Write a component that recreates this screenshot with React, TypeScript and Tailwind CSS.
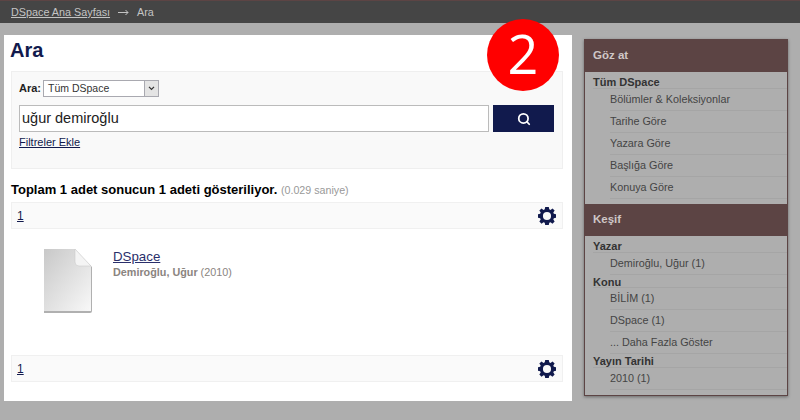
import { Search } from "lucide-react";

function Gear() {
  return (
    <svg viewBox="0 0 20 20" className="h-[18px] w-[18px] text-[#111a4d]" fill="currentColor">
      <path
        fillRule="evenodd"
        d="M8 0h4l.5 2.600 1.400.6 2.200-1.500L18.500 4l-1.500 2.200.6 1.400L20 8v4l-2.400.5-.6 1.400 1.500 2.200-2.400 2.400-2.200-1.500-1.400.6L12 20H8l-.5-2.400-1.400-.6-2.200 1.500L1.500 16.100 3 13.900l-.6-1.400L0 12V8l2.400-.4.6-1.400L1.500 4l2.400-2.300 2.200 1.500 1.400-.6L8 0Zm2 5.500a4.500 4.500 0 1 0 0 9 4.500 4.500 0 0 0 0-9Z"
      />
    </svg>
  );
}

function Pager() {
  return (
    <div className="flex h-[27px] items-center justify-between border border-[#f0f0f0] bg-[#fafafa] pr-[6px] pl-[5px]">
      <a className="text-[12px] text-[#111a4d] underline">1</a>
      <Gear />
    </div>
  );
}

function BoxHeader({ title }: { title: string }) {
  return (
    <div className="flex h-[32px] items-center bg-[#5c4444] pl-[8px] text-[11.5px] font-bold text-[#cfc7c7]">
      {title}
    </div>
  );
}

function GroupTitle({ title }: { title: string }) {
  return (
    <div className="ml-[8px] h-[13.5px] border-b border-[#a5a5a5] text-[11px] leading-[14px] font-bold text-[#333]">
      {title}
    </div>
  );
}

function Item({ label }: { label: string }) {
  return (
    <div className="ml-[25px] h-[22px] border-b border-[#a5a5a5] text-[10.8px] leading-[21px] text-[#444]">
      {label}
    </div>
  );
}

export default function App() {
  return (
    <div className="relative h-[420px] w-[800px] overflow-hidden bg-[#aeaeae] font-['Liberation_Sans',sans-serif]">
      {/* Breadcrumb */}
      <div className="flex h-[23px] items-center gap-[8px] border-t border-[#5c4444] bg-[#454545] pl-[11px] text-[10.8px] text-[#c4c4c4]">
        <a className="underline">DSpace Ana Sayfası</a>
        <svg viewBox="0 0 11 7" className="h-[7px] w-[11px]" fill="none" stroke="#c4c4c4" strokeWidth="1">
          <path d="M0 3.500h10M7.500 1l2.500 2.500L7.500 6" />
        </svg>
        <span>Ara</span>
      </div>

      <div className="flex items-start pt-[12px] pl-[4px]">
        {/* Main */}
        <div className="h-[366px] w-[568px] bg-white pr-[9px] pl-[7px]">
          <h1 className="mt-[3px] -ml-[1px] text-[20px] leading-[25px] font-bold text-[#111a4d]">Ara</h1>

          <div className="mt-[8px] h-[98px] border border-[#efefef] bg-[#f9f9f9] px-[7px] pt-[8px]">
            <div className="flex items-center gap-[2px]">
              <span className="text-[11px] font-bold text-[#222]">Ara:</span>
              <div className="flex h-[17px] w-[116px] items-center justify-between border border-[#a9a9b0] bg-white pl-[4px] text-[10.5px] text-[#333]">
                <span>Tüm DSpace</span>
                <span className="flex h-full w-[14px] items-center justify-center border-l border-[#a9a9b0] bg-[#e4e4e4]">
                  <svg viewBox="0 0 8 6" className="h-[5px] w-[7px]" fill="none" stroke="#333" strokeWidth="1.5">
                    <path d="M1 1l3 3 3-3" />
                  </svg>
                </span>
              </div>
            </div>
            <div className="mt-[8px] flex gap-[4px]">
              <div className="flex h-[27px] w-[470px] items-center border border-[#bbb] bg-white pl-[2px] text-[14.5px] text-[#222]">
                uğur demiroğlu
              </div>
              <button className="flex h-[27px] w-[61px] items-center justify-center bg-[#111a4d]">
                <Search className="h-[14px] w-[14px] text-white" strokeWidth={3} />
              </button>
            </div>
            <a className="mt-[2px] block text-[11px] text-[#111a4d] underline">Filtreler Ekle</a>
          </div>

          <div className="mt-[13px] h-[20px] text-[13px] leading-[16px] font-bold text-black">
            Toplam 1 adet sonucun 1 adeti gösteriliyor.{" "}
            <span className="text-[10.7px] font-normal text-[#999]">(0.029 saniye)</span>
          </div>

          <Pager />

          <div className="flex h-[126px] pt-[20px] pl-[32px]">
            <svg viewBox="0 0 50 66" className="-mt-[1px] h-[66px] w-[50px]">
              <defs>
                <linearGradient id="doc" x1="0" y1="0" x2="1" y2="1">
                  <stop offset="0" stopColor="#c8c8c8" />
                  <stop offset="1" stopColor="#f8f8f8" />
                </linearGradient>
              </defs>
              <path d="M1 2h31l17 17v44a2 2 0 0 1-2 2H1Z" fill="#b0b0b0" />
              <path d="M1 1h31l16 17v45H1Z" fill="url(#doc)" />
              <path d="M32 1l16 17H36a4 4 0 0 1-4-4Z" fill="#f4f4f4" stroke="#c4c4c4" strokeWidth="0.5" />
            </svg>
            <div className="ml-[20px]">
              <a className="block text-[13.3px] leading-[16px] text-[#2a2f6b] underline">DSpace</a>
              <div className="text-[10.8px] leading-[14px] font-bold text-[#8a8480]">
                Demiroğlu, Uğur <span className="font-normal">(2010)</span>
              </div>
            </div>
          </div>

          <Pager />
        </div>

        {/* Sidebar */}
        <div className="mt-[4px] ml-[12px] h-[357px] w-[204px] border border-[#5c4444] shadow-[0_1px_3px_rgba(0,0,0,0.4)]">
          <BoxHeader title="Göz at" />
          <div className="pt-[3px]">
            <GroupTitle title="Tüm DSpace" />
            <Item label="Bölümler & Koleksiyonlar" />
            <Item label="Tarihe Göre" />
            <Item label="Yazara Göre" />
            <Item label="Başlığa Göre" />
            <Item label="Konuya Göre" />
          </div>
          <div className="mt-[5.500px]">
            <BoxHeader title="Keşif" />
          </div>
          <div className="pt-[3px]">
            <GroupTitle title="Yazar" />
            <Item label="Demiroğlu, Uğur (1)" />
            <GroupTitle title="Konu" />
            <Item label="BİLİM (1)" />
            <Item label="DSpace (1)" />
            <Item label="... Daha Fazla Göster" />
            <GroupTitle title="Yayın Tarihi" />
            <Item label="2010 (1)" />
          </div>
        </div>
      </div>

      {/* Red number badge */}
      <div className="absolute top-[19px] left-[487px] flex h-[72px] w-[72px] items-center justify-center rounded-full bg-[#ff0000] pb-[5px] font-['Open_Sans',sans-serif] text-[54px] leading-none text-white">
        2
      </div>
    </div>
  );
}
